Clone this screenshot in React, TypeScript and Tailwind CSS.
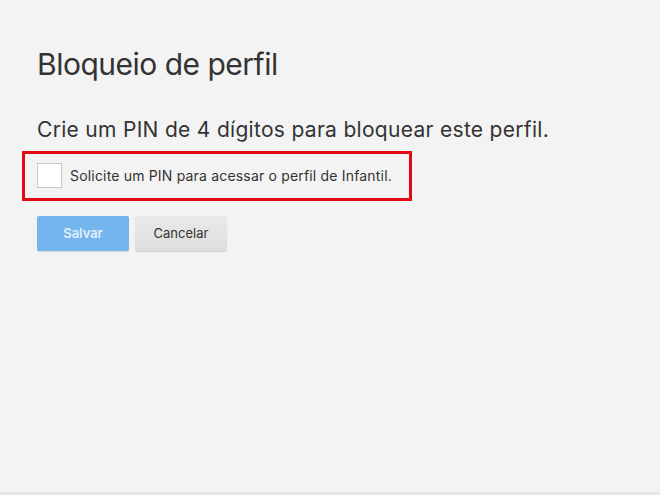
export default function App() {
  return (
    <div className="min-h-[495px] w-full bg-[#f3f3f3] font-['Inter','Liberation_Sans',sans-serif] text-[#333] flex flex-col">
      <div className="flex-1 pl-[37px] pt-[46px]">
        <h1 className="text-[30px] leading-[36px] font-normal tracking-[-0.5px]">Bloqueio de perfil</h1>

        <p className="mt-[35px] text-[21px] leading-[25px] tracking-[0.3px]">
          Crie um PIN de 4 dígitos para bloquear este perfil.
        </p>

        <div className="mt-[9px] -ml-[15px] w-[390px] border-[3px] border-[#e50914] pl-[12px] pt-[9px] pb-[10px] flex items-center gap-[8px]">
          <div className="w-[25px] h-[25px] bg-white border border-[#c9c9c9] shrink-0" />
          <span className="text-[14px] leading-[18px] tracking-[0.18px] text-[#333]">
            Solicite um PIN para acessar o perfil de Infantil.
          </span>
        </div>

        <div className="mt-[15px] flex gap-[6px]">
          <button className="w-[92px] h-[35px] bg-[#75b5ee] text-[#e2effb] text-[13px] font-semibold rounded-[2px] shadow-[0_1px_1px_rgba(0,0,0,0.12)]">
            Salvar
          </button>
          <button className="w-[92px] h-[35px] bg-gradient-to-b from-[#e9e9e9] to-[#dedede] text-[#333] text-[13px] rounded-[2px] shadow-[0_1px_1px_rgba(0,0,0,0.15)]">
            Cancelar
          </button>
        </div>
      </div>
      <div className="h-[3px] bg-[#e6e6e6]" />
    </div>
  );
}
